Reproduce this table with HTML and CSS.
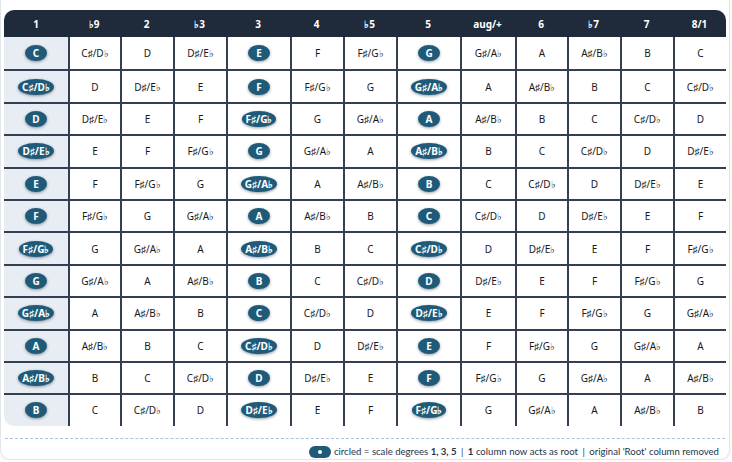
FILE: index.html
```html
<!DOCTYPE html>
<html lang="en">
<head>
<meta charset="utf-8">
<title>Scale degrees</title>
<link rel="stylesheet" href="styles.css">
</head>
<body>
<div class="card">
  <div class="grid">
    <div class="h">1</div><div class="h">♭9</div><div class="h">2</div><div class="h">♭3</div><div class="h">3</div><div class="h">4</div><div class="h">♭5</div><div class="h">5</div><div class="h">aug/+</div><div class="h">6</div><div class="h">♭7</div><div class="h">7</div><div class="h">8/1</div>

    <div class="c root"><span class="chip">C</span></div><div class="c">C♯/D♭</div><div class="c">D</div><div class="c">D♯/E♭</div><div class="c"><span class="chip">E</span></div><div class="c">F</div><div class="c">F♯/G♭</div><div class="c"><span class="chip">G</span></div><div class="c">G♯/A♭</div><div class="c">A</div><div class="c">A♯/B♭</div><div class="c">B</div><div class="c">C</div>

    <div class="c root"><span class="chip">C♯/D♭</span></div><div class="c">D</div><div class="c">D♯/E♭</div><div class="c">E</div><div class="c"><span class="chip">F</span></div><div class="c">F♯/G♭</div><div class="c">G</div><div class="c"><span class="chip">G♯/A♭</span></div><div class="c">A</div><div class="c">A♯/B♭</div><div class="c">B</div><div class="c">C</div><div class="c">C♯/D♭</div>

    <div class="c root"><span class="chip">D</span></div><div class="c">D♯/E♭</div><div class="c">E</div><div class="c">F</div><div class="c"><span class="chip">F♯/G♭</span></div><div class="c">G</div><div class="c">G♯/A♭</div><div class="c"><span class="chip">A</span></div><div class="c">A♯/B♭</div><div class="c">B</div><div class="c">C</div><div class="c">C♯/D♭</div><div class="c">D</div>

    <div class="c root"><span class="chip">D♯/E♭</span></div><div class="c">E</div><div class="c">F</div><div class="c">F♯/G♭</div><div class="c"><span class="chip">G</span></div><div class="c">G♯/A♭</div><div class="c">A</div><div class="c"><span class="chip">A♯/B♭</span></div><div class="c">B</div><div class="c">C</div><div class="c">C♯/D♭</div><div class="c">D</div><div class="c">D♯/E♭</div>

    <div class="c root"><span class="chip">E</span></div><div class="c">F</div><div class="c">F♯/G♭</div><div class="c">G</div><div class="c"><span class="chip">G♯/A♭</span></div><div class="c">A</div><div class="c">A♯/B♭</div><div class="c"><span class="chip">B</span></div><div class="c">C</div><div class="c">C♯/D♭</div><div class="c">D</div><div class="c">D♯/E♭</div><div class="c">E</div>

    <div class="c root"><span class="chip">F</span></div><div class="c">F♯/G♭</div><div class="c">G</div><div class="c">G♯/A♭</div><div class="c"><span class="chip">A</span></div><div class="c">A♯/B♭</div><div class="c">B</div><div class="c"><span class="chip">C</span></div><div class="c">C♯/D♭</div><div class="c">D</div><div class="c">D♯/E♭</div><div class="c">E</div><div class="c">F</div>

    <div class="c root"><span class="chip">F♯/G♭</span></div><div class="c">G</div><div class="c">G♯/A♭</div><div class="c">A</div><div class="c"><span class="chip">A♯/B♭</span></div><div class="c">B</div><div class="c">C</div><div class="c"><span class="chip">C♯/D♭</span></div><div class="c">D</div><div class="c">D♯/E♭</div><div class="c">E</div><div class="c">F</div><div class="c">F♯/G♭</div>

    <div class="c root"><span class="chip">G</span></div><div class="c">G♯/A♭</div><div class="c">A</div><div class="c">A♯/B♭</div><div class="c"><span class="chip">B</span></div><div class="c">C</div><div class="c">C♯/D♭</div><div class="c"><span class="chip">D</span></div><div class="c">D♯/E♭</div><div class="c">E</div><div class="c">F</div><div class="c">F♯/G♭</div><div class="c">G</div>

    <div class="c root"><span class="chip">G♯/A♭</span></div><div class="c">A</div><div class="c">A♯/B♭</div><div class="c">B</div><div class="c"><span class="chip">C</span></div><div class="c">C♯/D♭</div><div class="c">D</div><div class="c"><span class="chip">D♯/E♭</span></div><div class="c">E</div><div class="c">F</div><div class="c">F♯/G♭</div><div class="c">G</div><div class="c">G♯/A♭</div>

    <div class="c root"><span class="chip">A</span></div><div class="c">A♯/B♭</div><div class="c">B</div><div class="c">C</div><div class="c"><span class="chip">C♯/D♭</span></div><div class="c">D</div><div class="c">D♯/E♭</div><div class="c"><span class="chip">E</span></div><div class="c">F</div><div class="c">F♯/G♭</div><div class="c">G</div><div class="c">G♯/A♭</div><div class="c">A</div>

    <div class="c root"><span class="chip">A♯/B♭</span></div><div class="c">B</div><div class="c">C</div><div class="c">C♯/D♭</div><div class="c"><span class="chip">D</span></div><div class="c">D♯/E♭</div><div class="c">E</div><div class="c"><span class="chip">F</span></div><div class="c">F♯/G♭</div><div class="c">G</div><div class="c">G♯/A♭</div><div class="c">A</div><div class="c">A♯/B♭</div>

    <div class="c root"><span class="chip">B</span></div><div class="c">C</div><div class="c">C♯/D♭</div><div class="c">D</div><div class="c"><span class="chip">D♯/E♭</span></div><div class="c">E</div><div class="c">F</div><div class="c"><span class="chip">F♯/G♭</span></div><div class="c">G</div><div class="c">G♯/A♭</div><div class="c">A</div><div class="c">A♯/B♭</div><div class="c">B</div>
  </div>

  <div class="legend">
    <span class="mini"><span class="dot"></span></span>
    <span class="txt">circled = scale degrees <b>1, 3, 5</b> <span class="sep">|</span> <b>1</b> column now acts as root <span class="sep">|</span> original 'Root' column removed</span>
  </div>
</div>
</body>
</html>
```

FILE: styles.css
```css
html, body {
  margin: 0;
  padding: 0;
  background: #ffffff;
}

body {
  font-family: "Noto Sans", "Open Sans", "Liberation Sans", sans-serif;
  color: #1b1f24;
}

.card {
  box-sizing: border-box;
  width: 730px;
  height: 470px;
  margin-top: -10px;
  padding: 19px 4px 0 4px;
  background: #ffffff;
  border: 1px solid #e2e6eb;
  border-radius: 10px;
  box-shadow: 0 1px 3px rgba(30, 40, 60, 0.08);
}

.grid {
  display: grid;
  grid-template-columns: 64px 52px 53px 53px 64px 53px 53px 64px 55px 52px 53px 53px 53px;
  grid-template-rows: 27px repeat(12, 32.4px);
  width: 722px;
  margin-left: -1px;
  border-radius: 10px;
  overflow: hidden;
}

.h {
  background: #1f2a3a;
  color: #ffffff;
  font-weight: 700;
  font-size: 10px;
  display: flex;
  align-items: center;
  justify-content: center;
}

.c {
  box-sizing: border-box;
  background: #ffffff;
  border-top: 2px solid #344052;
  border-left: 2px solid #344052;
  font-size: 10px;
  display: flex;
  align-items: center;
  justify-content: center;
  color: #15191e;
}

.c:nth-child(-n+26) {
  border-top: none;
}

.root {
  background: #e8edf4;
  border-left: none;
}

.chip {
  display: inline-block;
  box-sizing: border-box;
  min-width: 22px;
  padding: 2px 4px;
  border-radius: 50%;
  background: #1f5b79;
  color: #ffffff;
  font-weight: 700;
  font-size: 10px;
  line-height: 12px;
  text-align: center;
  box-shadow: 0 1px 3px rgba(10, 30, 50, 0.45);
}

.legend {
  margin-top: 12px;
  border-top: 1px dashed #a9c3dc;
  padding: 7px 6px 0 0;
  display: flex;
  justify-content: flex-end;
  align-items: center;
  gap: 3px;
  font-family: "Lato", "Noto Sans", sans-serif;
  font-size: 9.6px;
  color: #26334a;
}

.legend b {
  font-weight: 700;
}

.sep {
  margin: 0 2px;
}

.mini {
  display: inline-flex;
  align-items: center;
  justify-content: center;
  width: 22px;
  height: 12px;
  border-radius: 6px;
  background: #1f5b79;
}

.dot {
  width: 4px;
  height: 4px;
  border-radius: 50%;
  background: #ffffff;
}
```
